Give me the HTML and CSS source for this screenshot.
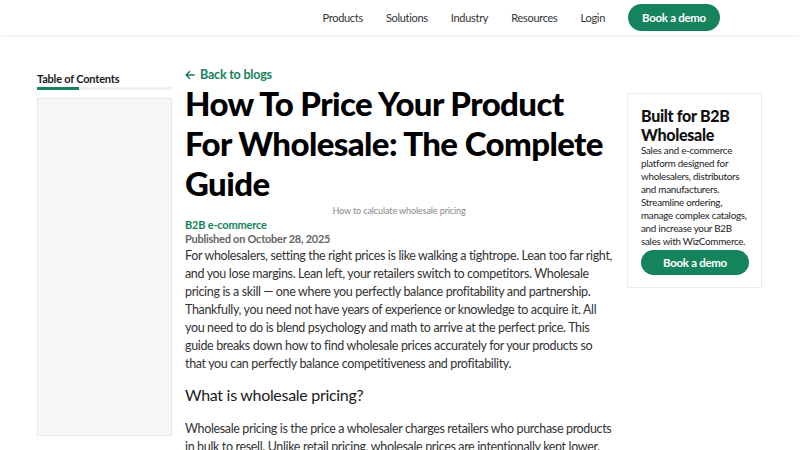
FILE: index.html
```html
<!DOCTYPE html>
<html lang="en">
<head>
<meta charset="utf-8">
<title>How To Price Your Product For Wholesale</title>
<link rel="stylesheet" href="styles.css">
</head>
<body>
<header class="topbar">
  <nav class="nav">
    <a class="nav-link" href="#">Products</a>
    <a class="nav-link" href="#">Solutions</a>
    <a class="nav-link" href="#">Industry</a>
    <a class="nav-link" href="#">Resources</a>
    <a class="nav-link" href="#">Login</a>
    <a class="btn btn-nav" href="#">Book a demo</a>
  </nav>
</header>
<div class="layout">
  <aside class="toc">
    <div class="toc-title">Table of Contents</div>
    <div class="toc-rule"><span class="toc-rule-active"></span></div>
    <div class="toc-box"></div>
  </aside>
  <main class="article">
    <a class="back" href="#">
      <svg class="back-icon" viewBox="0 0 12 12" width="10" height="10" aria-hidden="true"><path d="M11 6H1.5M5.5 1.8L1.3 6l4.2 4.2" fill="none" stroke="currentColor" stroke-width="1.8" stroke-linecap="round" stroke-linejoin="round"/></svg>
      Back to blogs
    </a>
    <h1 class="title">How To Price Your Product For Wholesale: The Complete Guide</h1>
    <div class="caption">How to calculate wholesale pricing</div>
    <div class="category">B2B e-commerce</div>
    <div class="published">Published on October 28, 2025</div>
    <p class="para">For wholesalers, setting the right prices is like walking a tightrope. Lean too far right, and you lose margins. Lean left, your retailers switch to competitors. Wholesale pricing is a skill — one where you perfectly balance profitability and partnership. Thankfully, you need not have years of experience or knowledge to acquire it. All you need to do is blend psychology and math to arrive at the perfect price. This guide breaks down how to find wholesale prices accurately for your products so that you can perfectly balance competitiveness and profitability.</p>
    <h2 class="subhead">What is wholesale pricing?</h2>
    <p class="para para-2">Wholesale pricing is the price a wholesaler charges retailers who purchase products in bulk to resell. Unlike retail pricing, wholesale prices are intentionally kept lower.</p>
  </main>
  <aside class="promo">
    <div class="promo-card">
      <h3 class="promo-title">Built for B2B Wholesale</h3>
      <p class="promo-text">Sales and e-commerce platform designed for wholesalers, distributors and manufacturers. Streamline ordering, manage complex catalogs, and increase your B2B sales with WizCommerce.</p>
      <a class="btn btn-card" href="#">Book a demo</a>
    </div>
  </aside>
</div>
</body>
</html>
```
FILE: styles.css
```css
* { box-sizing: border-box; }
html, body { margin: 0; padding: 0; }
body {
  font-family: Lato, "Noto Sans", sans-serif;
  color: #1a1a1a;
  background: #fff;
  height: 450px;
  overflow: hidden;
}
a { text-decoration: none; color: inherit; }

.topbar {
  height: 35px;
  background: #fff;
  box-shadow: 0 1px 4px rgba(0,0,0,0.08);
  display: flex;
  justify-content: flex-end;
  align-items: center;
  padding-right: 80px;
  position: relative;
  z-index: 1;
}
.nav { display: flex; align-items: center; gap: 23px; }
.nav-link {
  font-size: 11px;
  letter-spacing: -0.3px;
  color: #333;
}
.btn {
  background: #15845c;
  color: #fff;
  font-weight: 700;
  border-radius: 14px;
  display: flex;
  align-items: center;
  justify-content: center;
  font-size: 11.5px;
  letter-spacing: -0.3px;
}
.btn-nav {
  width: 92px;
  height: 27px;
}

.layout {
  display: grid;
  grid-template-columns: 135px 428px 135px;
  column-gap: 13px;
  padding-left: 37px;
}

.toc { padding-top: 36px; }
.toc-title {
  font-size: 11px;
  letter-spacing: -0.2px;
  font-weight: 700;
  line-height: 16px;
  color: #1a1a1a;
}
.toc-rule {
  height: 3px;
  background: #f0f0f0;
}
.toc-rule-active {
  display: block;
  width: 42px;
  height: 3px;
  background: #15845c;
}
.toc-box {
  margin-top: 8px;
  height: 338px;
  background: #f7f7f5;
  border: 1px solid #e8e8e6;
}

.article { padding-top: 32px; }
.back {
  display: flex;
  align-items: center;
  gap: 5px;
  font-size: 12.5px;
  letter-spacing: -0.2px;
  line-height: 16px;
  color: #15845c;
  font-weight: 700;
}
.back-icon { flex: none; }
.title {
  margin: 0;
  font-size: 33px;
  line-height: 40px;
  font-weight: 900;
  color: #000;
  letter-spacing: -0.6px;
}
.caption {
  font-size: 9px;
  letter-spacing: -0.1px;
  line-height: 14px;
  color: #888;
  text-align: center;
  margin-top: 1px;
}
.category {
  font-size: 11px;
  letter-spacing: -0.2px;
  line-height: 14px;
  font-weight: 700;
  color: #15845c;
}
.published {
  font-size: 11px;
  letter-spacing: -0.25px;
  line-height: 14px;
  font-weight: 700;
  color: #666;
}
.para {
  margin: 1px 0 0;
  font-size: 12.5px;
  letter-spacing: -0.35px;
  line-height: 18px;
  color: #333;
}
.subhead {
  margin: 10px 0 0;
  font-size: 16px;
  letter-spacing: -0.3px;
  line-height: 24px;
  font-weight: 400;
  color: #1a1a1a;
}
.para-2 { margin-top: 13px; }

.promo { padding-left: 1px; padding-top: 58px; }
.promo-card {
  width: 135px;
  border: 1px solid #ececec;
  padding: 12px 8px 12px 13px;
}
.promo-title {
  margin: 0;
  font-size: 16px;
  letter-spacing: -0.3px;
  line-height: 19px;
  font-weight: 900;
  color: #111;
}
.promo-text {
  margin: 0;
  font-size: 9.8px;
  letter-spacing: -0.25px;
  line-height: 13px;
  color: #222;
}
.btn-card {
  margin: 2px 4px 0 0;
  height: 25px;
  border-radius: 13px;
}
```
